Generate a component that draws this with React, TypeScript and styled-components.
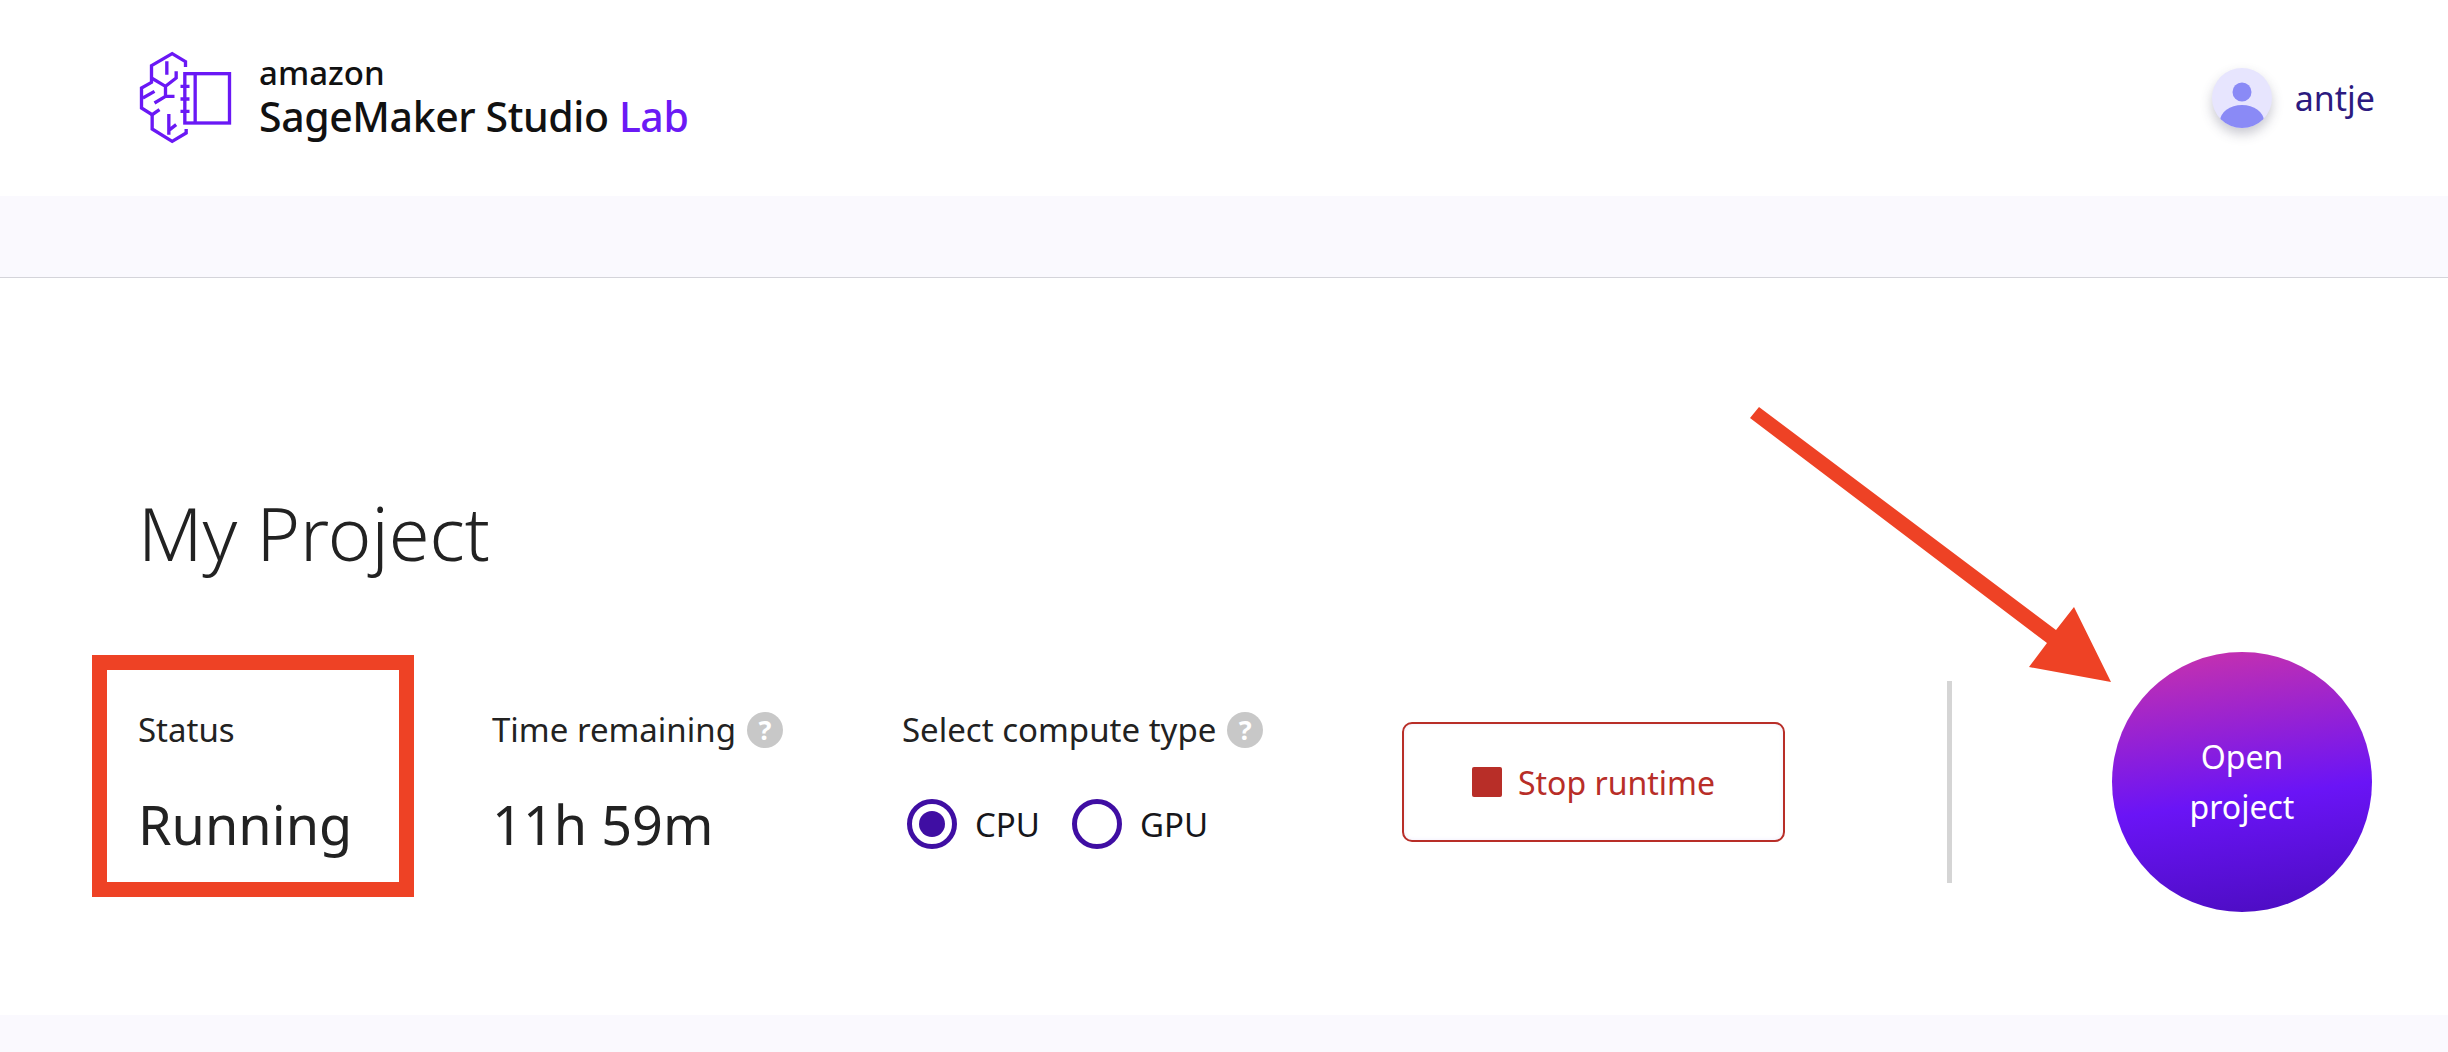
import React from 'react';
import styled, { createGlobalStyle } from 'styled-components';

const GlobalStyle = createGlobalStyle`
  html, body {
    margin: 0;
    padding: 0;
    background: #ffffff;
    font-family: "Noto Sans", "Open Sans", sans-serif;
    color: #1f1f1f;
  }
`;

const Page = styled.div`
  width: 2448px;
  height: 1052px;
  overflow: hidden;
  position: relative;
`;

const Header = styled.header`
  height: 196px;
  padding: 0 73px 0 138px;
  display: flex;
  align-items: center;
  justify-content: space-between;
  box-sizing: border-box;
`;

const Brand = styled.div`
  display: flex;
  align-items: center;
  gap: 26px;
`;

const BrandText = styled.div`
  display: flex;
  flex-direction: column;
  color: #111111;
`;

const BrandTop = styled.span`
  font-size: 33px;
  line-height: 36px;
  font-weight: 500;
`;

const BrandName = styled.span`
  font-size: 41px;
  line-height: 50px;
  font-weight: 500;
  letter-spacing: -0.4px;
`;

const BrandAccent = styled.span`
  color: #6b1af5;
`;

const User = styled.div`
  display: flex;
  align-items: center;
  gap: 23px;
  font-size: 34px;
  color: #2c1a80;
`;

const Avatar = styled.div`
  width: 60px;
  height: 60px;
  border-radius: 50%;
  overflow: hidden;
  background: #e7e5fe;
  box-shadow: 0 6px 12px rgba(60, 60, 90, 0.28);
  display: flex;
`;

const Band = styled.div`
  height: 81px;
  background: #faf9fe;
  border-bottom: 1px solid #d4d4da;
`;

const Main = styled.main`
  height: 737px;
  padding: 0 0 0 138px;
  box-sizing: border-box;
  display: flex;
  flex-direction: column;
`;

const Title = styled.h1`
  margin: 205px 0 0;
  font-size: 74px;
  line-height: 100px;
  font-weight: 300;
  color: #222222;
`;

const Row = styled.div`
  margin-top: 68px;
  display: flex;
  align-items: center;
  height: 262px;
`;

const Field = styled.div<{ $width: number }>`
  width: ${(p) => p.$width}px;
  flex: none;
  position: relative;
  display: flex;
  flex-direction: column;
  gap: 34px;
`;

const Label = styled.div`
  display: flex;
  align-items: center;
  gap: 11px;
  font-size: 33px;
  line-height: 50px;
  color: #222222;
`;

const Help = styled.span`
  width: 36px;
  height: 36px;
  border-radius: 50%;
  background: #c8c8c8;
  color: #ffffff;
  font-size: 27px;
  font-weight: 700;
  line-height: 36px;
  text-align: center;
`;

const Value = styled.div`
  font-size: 54px;
  line-height: 70px;
  color: #222222;
`;

const Radios = styled.div`
  height: 70px;
  display: flex;
  align-items: center;
  gap: 32px;
  padding-left: 5px;
`;

const RadioItem = styled.label`
  display: flex;
  align-items: center;
  gap: 18px;
  font-size: 33px;
  color: #16161a;
`;

const RadioMark = styled.span<{ $checked?: boolean }>`
  width: 50px;
  height: 50px;
  box-sizing: border-box;
  border: 5px solid #3f0ea3;
  border-radius: 50%;
  display: flex;
  align-items: center;
  justify-content: center;

  &::after {
    content: '';
    width: 26px;
    height: 26px;
    border-radius: 50%;
    background: ${(p) => (p.$checked ? '#3f0ea3' : 'transparent')};
  }
`;

const StopButton = styled.button`
  width: 383px;
  height: 120px;
  flex: none;
  box-sizing: border-box;
  background: #ffffff;
  border: 2px solid #b82e28;
  border-radius: 10px;
  box-shadow: inset 0 0 4px rgba(110, 90, 230, 0.12);
  color: #b82e28;
  font-family: inherit;
  font-size: 32px;
  display: flex;
  align-items: center;
  justify-content: center;
  gap: 16px;
`;

const StopSquare = styled.span`
  width: 30px;
  height: 30px;
  background: #b82e28;
  border-radius: 2px;
`;

const Divider = styled.div`
  width: 5px;
  height: 202px;
  margin-left: 162px;
  flex: none;
  background: #d5d5d5;
`;

const OpenButton = styled.button`
  width: 260px;
  height: 260px;
  margin-left: 160px;
  flex: none;
  border: none;
  border-radius: 50%;
  background: linear-gradient(172deg, #c631ae 3%, #6a14f6 56%, #4a0cbe 100%);
  color: #ffffff;
  font-family: inherit;
  font-size: 32px;
  line-height: 50px;
  padding: 0 60px;
`;

const StatusFrame = styled.div`
  position: absolute;
  left: -46px;
  top: -50px;
  width: 322px;
  height: 242px;
  box-sizing: border-box;
  border: 15px solid #ee4225;
`;

const Arrow = styled.svg`
  position: absolute;
  left: 0;
  top: 0;
  pointer-events: none;
`;

const Logo = () => (
  <svg width="95" height="94" viewBox="36 24 284 282" fill="none" stroke="#6a18f5" strokeWidth="10">
    <path d="M178 72V56L138 32 76 68V118L46 135V195L78 215 100 200" />
    <path d="M78 215V258L138 295 180 270V258" />
    <path d="M122 55V95M150 85V105L118 130 76 105M118 130V160H145M118 160L85 180M50 165L85 145" />
    <path d="M128 213V275M150 245L128 262" />
    <rect x="176" y="92" width="134" height="148" />
    <path d="M207 92V240M163 130H190M163 168H190M163 205H190" />
  </svg>
);

const AvatarIcon = () => (
  <svg width="60" height="60" viewBox="0 0 60 60">
    <circle cx="30" cy="24" r="9.5" fill="#8a8af6" />
    <ellipse cx="30" cy="53" rx="22" ry="16" fill="#8a8af6" />
  </svg>
);

export default function App() {
  return (
    <Page>
      <GlobalStyle />
      <Header>
        <Brand>
          <Logo />
          <BrandText>
            <BrandTop>amazon</BrandTop>
            <BrandName>
              SageMaker Studio <BrandAccent>Lab</BrandAccent>
            </BrandName>
          </BrandText>
        </Brand>
        <User>
          <Avatar>
            <AvatarIcon />
          </Avatar>
          antje
        </User>
      </Header>
      <Band />
      <Main>
        <Title>My Project</Title>
        <Row>
          <Field $width={354}>
            <Label>Status</Label>
            <Value>Running</Value>
            <StatusFrame />
          </Field>
          <Field $width={410}>
            <Label>
              Time remaining <Help>?</Help>
            </Label>
            <Value>11h 59m</Value>
          </Field>
          <Field $width={500}>
            <Label>
              Select compute type <Help>?</Help>
            </Label>
            <Radios>
              <RadioItem>
                <RadioMark $checked />
                CPU
              </RadioItem>
              <RadioItem>
                <RadioMark />
                GPU
              </RadioItem>
            </Radios>
          </Field>
          <StopButton>
            <StopSquare />
            Stop runtime
          </StopButton>
          <Divider />
          <OpenButton>Open project</OpenButton>
        </Row>
      </Main>
      <Band />
      <Arrow width="2448" height="1052">
        <polygon points="1750,418 1759,407 2056,630 2074,607 2111,682 2029,667 2047,643" fill="#ee4225" />
      </Arrow>
    </Page>
  );
}
